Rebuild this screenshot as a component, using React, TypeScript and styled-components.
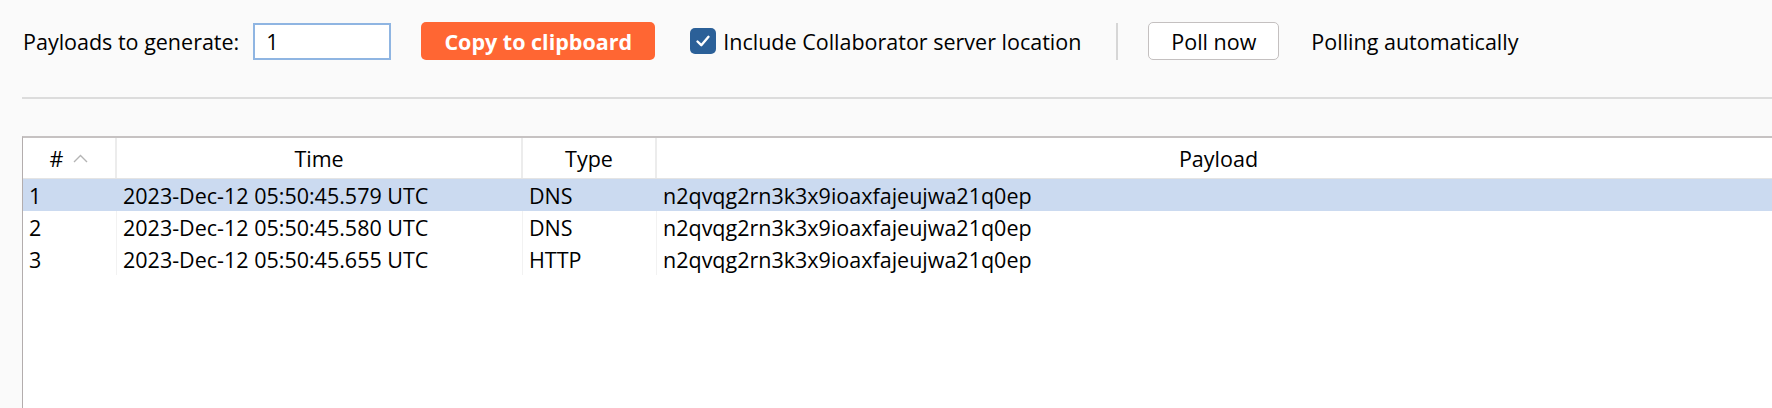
import React from 'react';
import styled, { createGlobalStyle } from 'styled-components';

const GlobalStyle = createGlobalStyle`
  html, body {
    margin: 0;
    padding: 0;
    background: #fafafa;
    overflow: hidden;
  }
  body {
    font-family: 'Open Sans', 'Noto Sans', sans-serif;
    font-size: 21.5px;
    color: #000;
  }
`;

interface Interaction {
  id: number;
  time: string;
  type: string;
  payload: string;
}

const rows: Interaction[] = [
  { id: 1, time: '2023-Dec-12 05:50:45.579 UTC', type: 'DNS', payload: 'n2qvqg2rn3k3x9ioaxfajeujwa21q0ep' },
  { id: 2, time: '2023-Dec-12 05:50:45.580 UTC', type: 'DNS', payload: 'n2qvqg2rn3k3x9ioaxfajeujwa21q0ep' },
  { id: 3, time: '2023-Dec-12 05:50:45.655 UTC', type: 'HTTP', payload: 'n2qvqg2rn3k3x9ioaxfajeujwa21q0ep' },
];

const columns = '94px 406px 134px 1fr';

const SortArrow = () => (
  <svg width="15" height="9" viewBox="0 0 15 9">
    <path d="M1 8 L7.5 1.5 L14 8" fill="none" stroke="#b4b4b4" strokeWidth="1.4" />
  </svg>
);

const Check = () => (
  <svg width="16" height="14" viewBox="0 0 16 14">
    <path d="M2.5 7.5 L6.3 11.2 L13.5 2.8" fill="none" stroke="#fff" strokeWidth="2.4" strokeLinecap="round" strokeLinejoin="round" />
  </svg>
);

const App: React.FC = () => {
  const selected = 1;

  return (
    <>
      <GlobalStyle />
      <Page>
        <Toolbar>
          <Label>Payloads to generate:</Label>
          <CountInput>1</CountInput>
          <CopyButton>Copy to clipboard</CopyButton>
          <CheckLabel>
            <CheckBox>
              <Check />
            </CheckBox>
            Include Collaborator server location
          </CheckLabel>
          <VSeparator />
          <PollButton>Poll now</PollButton>
          <Label>Polling automatically</Label>
        </Toolbar>
        <HRule />
        <Table>
          <HeaderRow>
            <HeaderCell>
              <span>#</span>
              <SortArrow />
            </HeaderCell>
            <HeaderCell>Time</HeaderCell>
            <HeaderCell>Type</HeaderCell>
            <HeaderCell $last>Payload</HeaderCell>
          </HeaderRow>
          {rows.map((r) => (
            <Row key={r.id} $selected={r.id === selected}>
              <Cell>{r.id}</Cell>
              <Cell>{r.time}</Cell>
              <Cell>{r.type}</Cell>
              <Cell $last>{r.payload}</Cell>
            </Row>
          ))}
        </Table>
      </Page>
    </>
  );
};

export default App;

const Page = styled.div`
  display: flex;
  flex-direction: column;
  width: 1772px;
  height: 408px;
`;

const Toolbar = styled.div`
  display: flex;
  align-items: center;
  height: 38px;
  padding: 22px 0 0 23px;
`;

const Label = styled.span`
  white-space: nowrap;
  margin-right: 14px;
`;

const CountInput = styled.div`
  box-sizing: border-box;
  width: 138px;
  height: 37px;
  border: 2px solid #8fb5e2;
  background: #fff;
  padding-left: 11px;
  display: flex;
  align-items: center;
  margin-right: 30px;
`;

const CopyButton = styled.div`
  box-sizing: border-box;
  width: 234px;
  height: 38px;
  border-radius: 5px;
  background: #ff6633;
  color: #fff;
  font-weight: 700;
  display: flex;
  align-items: center;
  justify-content: center;
  margin-right: 35px;
`;

const CheckLabel = styled.label`
  display: flex;
  align-items: center;
  gap: 7px;
  white-space: nowrap;
  margin-right: 35px;
`;

const CheckBox = styled.span`
  width: 26px;
  height: 26px;
  border-radius: 5px;
  background: #2b6098;
  display: flex;
  align-items: center;
  justify-content: center;
`;

const VSeparator = styled.div`
  width: 2px;
  height: 37px;
  background: #d6d6d6;
  margin-right: 30px;
`;

const PollButton = styled.div`
  box-sizing: border-box;
  width: 131px;
  height: 38px;
  border: 1.5px solid #c4c0c0;
  border-radius: 5px;
  background: #fff;
  display: flex;
  align-items: center;
  justify-content: center;
  margin-right: 32px;
`;

const HRule = styled.div`
  height: 2px;
  margin: 37px 0 0 22px;
  background: #dcdcdc;
`;

const Table = styled.div`
  box-sizing: border-box;
  margin: 37px 0 0 22px;
  width: 1758px;
  flex: 1;
  background: #fff;
  border-top: 2px solid #c6c2c2;
  border-left: 1.5px solid #b3adad;
`;

const HeaderRow = styled.div`
  display: grid;
  grid-template-columns: ${columns};
  height: 40px;
  border-bottom: 1px solid #e4e4e4;
`;

const HeaderCell = styled.div<{ $last?: boolean }>`
  display: flex;
  align-items: center;
  justify-content: center;
  gap: 10px;
  border-right: ${({ $last }) => ($last ? 'none' : '2px solid #ececec')};
`;

const Row = styled.div<{ $selected?: boolean }>`
  display: grid;
  grid-template-columns: ${columns};
  height: 32px;
  background: ${({ $selected }) => ($selected ? '#cbdaf0' : '#fff')};

  & > div {
    border-right-color: ${({ $selected }) => ($selected ? 'transparent' : '#f2f2f2')};
  }
`;

const Cell = styled.div<{ $last?: boolean }>`
  display: flex;
  align-items: center;
  padding-left: 6px;
  white-space: nowrap;
  border-right: ${({ $last }) => ($last ? 'none' : '1px solid #f2f2f2')};
`;
